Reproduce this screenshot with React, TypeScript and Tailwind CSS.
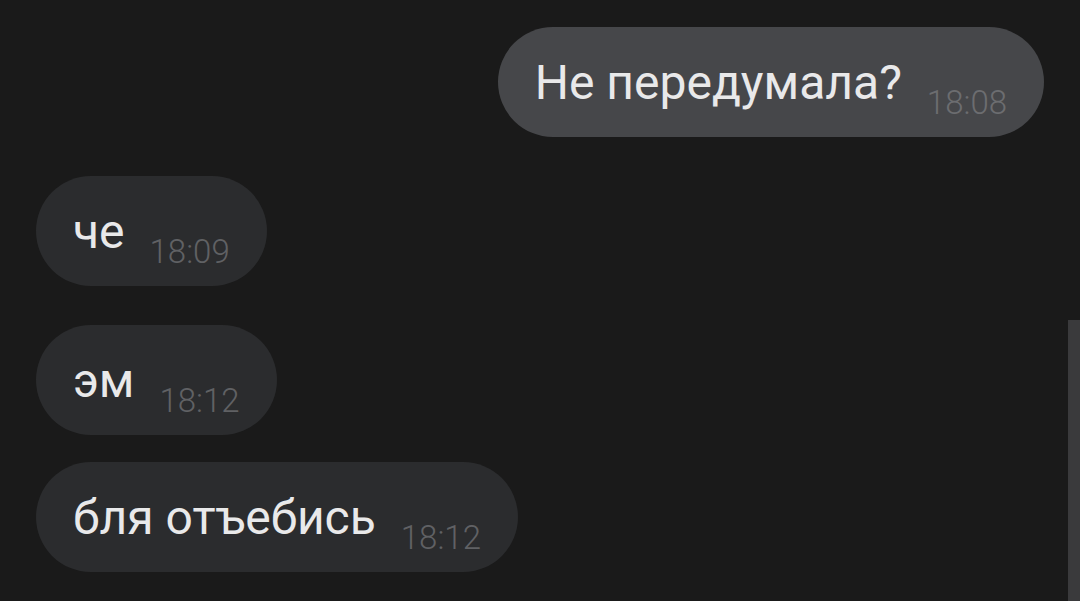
import React from 'react';

type Msg = { text: string; time: string; out?: boolean; gap: string };

const MESSAGES: Msg[] = [
  { text: 'Не передумала?', time: '18:08', out: true, gap: 'mt-[27px]' },
  { text: 'че', time: '18:09', gap: 'mt-[39px]' },
  { text: 'эм', time: '18:12', gap: 'mt-[39px]' },
  { text: 'бля отъебись', time: '18:12', gap: 'mt-[27px]' },
];

function Bubble({ msg }: { msg: Msg }) {
  return (
    <div className={`flex ${msg.out ? 'justify-end' : 'justify-start'} ${msg.gap}`}>
      <div
        className={`flex items-baseline h-[110px] pt-[28px] pl-[37px] pr-[37px] rounded-full ${
          msg.out ? 'bg-[#46474a]' : 'bg-[#2b2c2e]'
        }`}
      >
        <span className="text-[48px] leading-[56px] text-[#e9e9ea]">{msg.text}</span>
        <span
          className={`ml-[25px] text-[33px] leading-[38px] font-light translate-y-[15px] ${
            msg.out ? 'text-[#6c6d70]' : 'text-[#606164]'
          }`}
        >
          {msg.time}
        </span>
      </div>
    </div>
  );
}

export default function App() {
  return (
    <div
      className="relative w-[1080px] h-[601px] overflow-hidden bg-[#1a1a1a] px-[36px]"
      style={{ fontFamily: 'Roboto, "Noto Sans", sans-serif' }}
    >
      {MESSAGES.map((m, i) => (
        <Bubble key={i} msg={m} />
      ))}
      {/* scrollbar thumb */}
      <div className="absolute right-0 top-[320px] bottom-0 w-[12px] bg-[#3a3a3c]" />
    </div>
  );
}
